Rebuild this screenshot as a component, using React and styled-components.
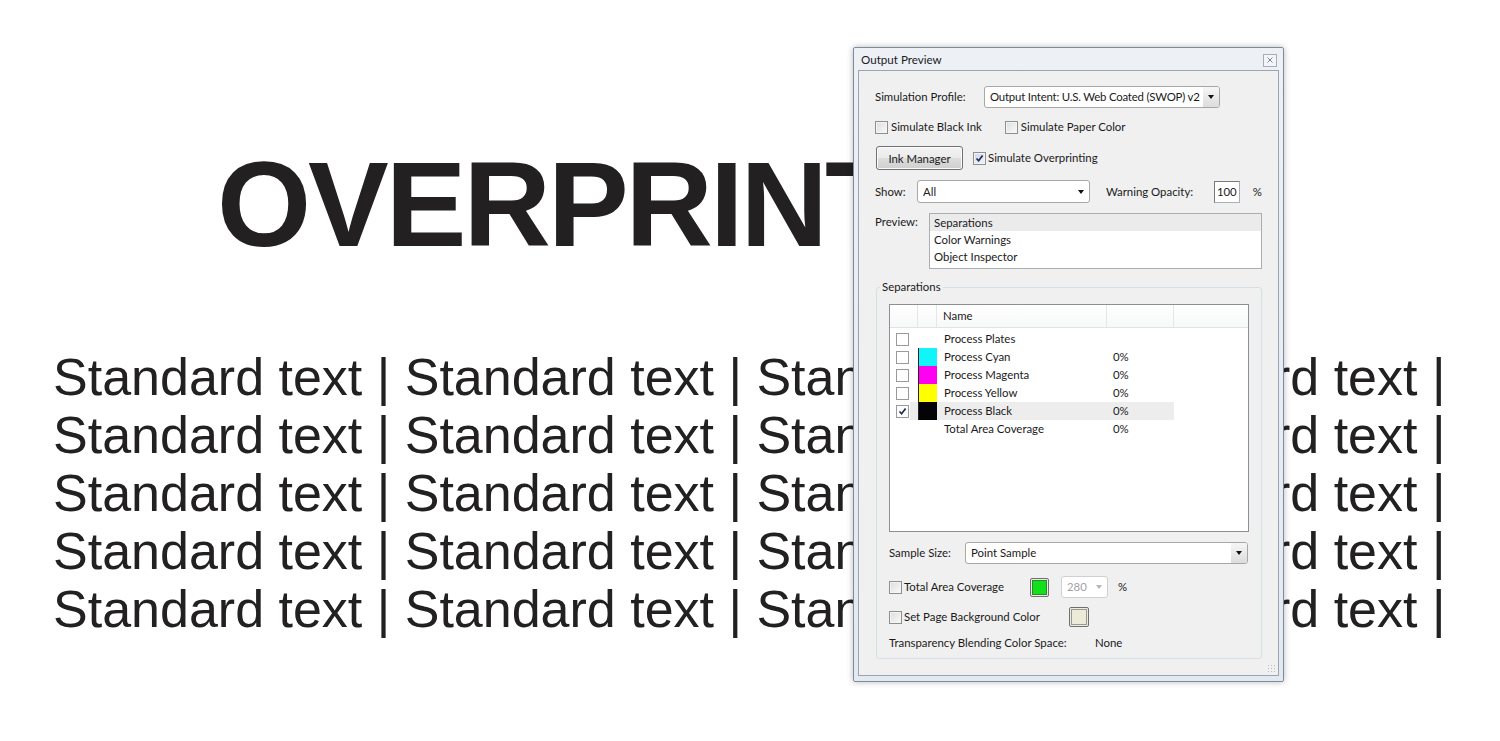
import React from 'react';
import styled, { createGlobalStyle, css } from 'styled-components';

const UI_FONT = `Lato, "Noto Sans", sans-serif`;

const GlobalStyle = createGlobalStyle`
  html, body {
    margin: 0;
    background: #fff;
  }
  body {
    width: 1500px;
    height: 741px;
    overflow: hidden;
  }
`;

// ---------- the document behind the panel ----------

const Page = styled.div`
  position: relative;
  width: 1500px;
  height: 741px;
  padding-top: 144px;
  box-sizing: border-box;
  font-family: "Liberation Sans", Arial, sans-serif;
  color: #222021;
`;

const Heading = styled.h1`
  margin: 0 0 0 217px;
  font-size: 121px;
  line-height: 121px;
  font-weight: 700;
  letter-spacing: -3px;
  white-space: nowrap;
`;

const TextBlock = styled.div`
  margin-top: 83px;
  padding-left: 53px;
`;

const Line = styled.div`
  font-size: 52px;
  line-height: 58px;
  white-space: nowrap;
`;

// ---------- dialog window ----------

const Window = styled.div`
  position: absolute;
  left: 853px;
  top: 47px;
  width: 431px;
  height: 635px;
  box-sizing: border-box;
  display: flex;
  flex-direction: column;
  background: linear-gradient(#edf1f6, #e3e9f0);
  border: 1px solid #7f8b9c;
  border-radius: 2px;
  box-shadow: 0 0 6px rgba(0, 0, 0, 0.28);
  font-family: ${UI_FONT};
  font-size: 11.4px;
  color: #1a1a1a;
`;

const TitleBar = styled.div`
  height: 22px;
  display: flex;
  align-items: center;
  justify-content: space-between;
  padding: 0 6px 0 7px;
`;

const Title = styled.span`
  font-size: 11.6px;
`;

const CloseBox = styled.div`
  width: 14px;
  height: 13px;
  margin-top: 2px;
  box-sizing: border-box;
  border: 1px solid #a3adbb;
  background: #f3f5f8;
  display: flex;
  align-items: center;
  justify-content: center;
`;

const Body = styled.div`
  flex: 1;
  margin: 0 4px 5px 4px;
  border: 1px solid #9aa4b2;
  background: #f0f0f0;
  padding: 15px 16px 0 16px;
  display: flex;
  flex-direction: column;
  position: relative;
`;

const Row = styled.div`
  display: flex;
  align-items: center;
  height: ${p => p.h || 22}px;
  margin-top: ${p => p.mt || 0}px;
`;

const Label = styled.span`
  width: ${p => (p.w ? `${p.w}px` : 'auto')};
  flex-shrink: 0;
  white-space: nowrap;
  line-height: 14px;
  color: ${p => (p.muted ? '#a0a0a0' : 'inherit')};
  margin-left: ${p => p.ml || 0}px;
`;

const Select = styled.div`
  width: ${p => p.w}px;
  height: ${p => p.h || 22}px;
  box-sizing: border-box;
  border: 1px solid #a7a7a7;
  border-radius: 3px;
  background: #fff;
  display: flex;
  align-items: center;
  padding-left: 5px;
  margin-left: ${p => p.ml || 0}px;
  color: ${p => (p.disabled ? '#a2a2a2' : 'inherit')};
  ${p => p.disabled && css`border-color: #d0d0d0;`}
`;

const SelectText = styled.span`
  flex: 1;
  white-space: nowrap;
  overflow: hidden;
  line-height: 14px;
  letter-spacing: ${p => (p.tight ? '-0.2px' : 'normal')};
`;

const Arrow = styled.span`
  width: 16px;
  align-self: stretch;
  display: flex;
  align-items: center;
  justify-content: center;
  background: ${p => (p.shaded ? 'linear-gradient(#f6f6f6, #dcdcdc)' : 'transparent')};
  border-radius: 0 2px 2px 0;
  &::after {
    content: '';
    border-left: 3.5px solid transparent;
    border-right: 3.5px solid transparent;
    border-top: 4px solid ${p => (p.light ? '#b5b5b5' : '#111')};
  }
`;

const CheckBox = styled.span`
  width: 13px;
  height: 13px;
  box-sizing: border-box;
  flex-shrink: 0;
  border: 1px solid #8e8f8f;
  background: linear-gradient(135deg, #dcdcdc, #fbfbfb);
  box-shadow: inset 0 0 0 1px #f4f4f4;
  display: flex;
  align-items: center;
  justify-content: center;
  margin-left: ${p => p.ml || 0}px;
  margin-right: ${p => p.mr ?? 3}px;
  ${p => p.checked && css`background: linear-gradient(135deg, #c9d6ec, #f2f6fc);`}
  ${p => p.flat && css`background: #fff; border-color: #9a9a9a; box-shadow: none;`}
`;

const Check = ({ checked, ml, mr, flat }) => (
  <CheckBox checked={checked} ml={ml} mr={mr} flat={flat}>
    {checked && (
      <svg width="9" height="9" viewBox="0 0 9 9">
        <path d="M1.5 4.5 L3.6 6.8 L7.6 1.6" fill="none" stroke="#1c2a52" strokeWidth="1.7" />
      </svg>
    )}
  </CheckBox>
);

const Button = styled.div`
  width: 87px;
  height: 24px;
  box-sizing: border-box;
  margin-left: 1px;
  border: 1px solid #707070;
  border-radius: 3px;
  background: linear-gradient(#f2f2f2 0%, #ebebeb 50%, #dddddd 51%, #cfcfcf 100%);
  box-shadow: inset 0 0 0 1px #fbfbfb;
  display: flex;
  align-items: center;
  justify-content: center;
  margin-right: 10px;
`;

const TextInput = styled.div`
  width: 26px;
  height: 22px;
  box-sizing: border-box;
  border: 1px solid #abadb3;
  border-top-color: #7a7a7a;
  border-left-color: #7a7a7a;
  background: #fff;
  padding-left: 2px;
  display: flex;
  align-items: center;
`;

const PreviewRow = styled.div`
  display: flex;
  margin-top: 10px;
`;

const PreviewLabel = styled.span`
  width: 54px;
  padding-top: 2px;
  line-height: 14px;
`;

const ListBox = styled.div`
  width: 333px;
  height: 56px;
  box-sizing: border-box;
  border: 1px solid #abadb3;
  background: #fff;
`;

const ListItem = styled.div`
  height: 17px;
  line-height: 17px;
  padding-left: 4px;
  background: ${p => (p.selected ? '#ebebeb' : 'transparent')};
`;

const Group = styled.fieldset`
  margin: 10px 0 0 1px;
  width: 386px;
  height: 380px;
  box-sizing: border-box;
  padding: 9px 12px 0 12px;
  border: 1px solid #d5dfe5;
  border-radius: 3px;
  min-width: 0;
`;

const Legend = styled.legend`
  padding: 0 2px;
  margin-left: -9px;
  line-height: 16px;
`;

const Table = styled.div`
  height: 228px;
  box-sizing: border-box;
  border: 1px solid #8c9096;
  background: #fff;
`;

const HeaderRow = styled.div`
  display: grid;
  grid-template-columns: 28px 19px 170px 67px 1fr;
  height: 22px;
  border-bottom: 1px solid #e2e2e2;
  background: linear-gradient(#ffffff, #f7f8f9);
  margin-bottom: 2px;
`;

const HeaderCell = styled.div`
  border-right: ${p => (p.last ? 'none' : '1px solid #e6e6e6')};
  padding-left: 6px;
  line-height: 22px;
`;

const DataRow = styled.div`
  display: flex;
  height: 18px;
`;

const CheckCell = styled.div`
  width: 20px;
  padding-left: 6px;
  box-sizing: border-box;
  display: flex;
  align-items: center;
`;

const RowBody = styled.div`
  width: 264px;
  display: grid;
  grid-template-columns: 8px 19px 170px 67px;
  background: ${p => (p.selected ? '#ededed' : 'transparent')};
`;

const Swatch = styled.div`
  grid-column: 2;
  background: ${p => p.color || 'transparent'};
  border-left: ${p => (p.color ? '1px solid #222' : 'none')};
`;

const Cell = styled.div`
  padding-left: ${p => p.pl}px;
  line-height: 18px;
  white-space: nowrap;
`;

const ColorButton = styled.div`
  width: ${p => p.size}px;
  height: ${p => p.size}px;
  box-sizing: border-box;
  border: 1px solid #6f6f6f;
  border-radius: 2px;
  padding: 2px;
  background: #ececec;
  flex-shrink: 0;
  &::after {
    content: '';
    display: block;
    width: 100%;
    height: 100%;
    background: ${p => p.fill};
    box-shadow: 0 0 0 1px ${p => p.edge};
  }
`;

const Grip = styled.div`
  position: absolute;
  right: 2px;
  bottom: 2px;
  width: 9px;
  height: 9px;
  background-image: radial-gradient(#b9bec6 0.8px, transparent 1px);
  background-size: 3px 3px;
`;

const separations = [
  { name: 'Process Plates', value: '' },
  { name: 'Process Cyan', value: '0%', color: '#10f4fa' },
  { name: 'Process Magenta', value: '0%', color: '#ff00f0' },
  { name: 'Process Yellow', value: '0%', color: '#ffff00' },
  { name: 'Process Black', value: '0%', color: '#050308', checked: true, selected: true },
  { name: 'Total Area Coverage', value: '0%', noCheck: true },
];

const lineText = 'Standard text | Standard text | Standard text | Standard text |';

function OutputPreview() {
  return (
    <Window>
      <TitleBar>
        <Title>Output Preview</Title>
        <CloseBox>
          <svg width="6" height="6" viewBox="0 0 6 6">
            <path d="M0.5 0.5 L5.5 5.5 M5.5 0.5 L0.5 5.5" stroke="#7d8794" strokeWidth="1" />
          </svg>
        </CloseBox>
      </TitleBar>
      <Body>
        <Row h={22}>
          <Label w={109}>Simulation Profile:</Label>
          <Select w={236}>
            <SelectText tight>Output Intent: U.S. Web Coated (SWOP) v2</SelectText>
            <Arrow shaded />
          </Select>
        </Row>

        <Row h={16} mt={11}>
          <Check />
          <Label>Simulate Black Ink</Label>
          <Check ml={23} />
          <Label>Simulate Paper Color</Label>
        </Row>

        <Row h={24} mt={11}>
          <Button>Ink Manager</Button>
          <Check checked mr={2} />
          <Label>Simulate Overprinting</Label>
        </Row>

        <Row h={23} mt={10}>
          <Label w={42}>Show:</Label>
          <Select w={173} h={23}>
            <SelectText>All</SelectText>
            <Arrow />
          </Select>
          <Label w={108} ml={16}>Warning Opacity:</Label>
          <TextInput>100</TextInput>
          <Label ml={13}>%</Label>
        </Row>

        <PreviewRow>
          <PreviewLabel>Preview:</PreviewLabel>
          <ListBox>
            <ListItem selected>Separations</ListItem>
            <ListItem>Color Warnings</ListItem>
            <ListItem>Object Inspector</ListItem>
          </ListBox>
        </PreviewRow>

        <Group>
          <Legend>Separations</Legend>
          <Table>
            <HeaderRow>
              <HeaderCell />
              <HeaderCell />
              <HeaderCell>Name</HeaderCell>
              <HeaderCell />
              <HeaderCell last />
            </HeaderRow>
            {separations.map(s => (
              <DataRow key={s.name}>
                <CheckCell>{!s.noCheck && <Check flat checked={s.checked} mr={0} />}</CheckCell>
                <RowBody selected={s.selected}>
                  <Swatch color={s.color} />
                  <Cell pl={7}>{s.name}</Cell>
                  <Cell pl={6}>{s.value}</Cell>
                </RowBody>
              </DataRow>
            ))}
          </Table>

          <Row h={22} mt={10}>
            <Label w={76}>Sample Size:</Label>
            <Select w={283}>
              <SelectText>Point Sample</SelectText>
              <Arrow shaded />
            </Select>
          </Row>

          <Row h={22} mt={12}>
            <Check mr={2} />
            <Label w={126}>Total Area Coverage</Label>
            <ColorButton size={19} fill="#12e01a" edge="#2a8a2a" />
            <Select w={47} disabled ml={12}>
              <SelectText>280</SelectText>
              <Arrow light />
            </Select>
            <Label ml={10}>%</Label>
          </Row>

          <Row h={20} mt={9}>
            <Check mr={2} />
            <Label w={165}>Set Page Background Color</Label>
            <ColorButton size={20} fill="#ecebd8" edge="#9a9a8a" />
          </Row>

          <Row h={16} mt={8}>
            <Label w={206}>Transparency Blending Color Space:</Label>
            <Label>None</Label>
          </Row>
        </Group>
        <Grip />
      </Body>
    </Window>
  );
}

export default function App() {
  return (
    <>
      <GlobalStyle />
      <Page>
        <Heading>OVERPRINT</Heading>
        <TextBlock>
          {[0, 1, 2, 3, 4].map(i => (
            <Line key={i}>{lineText}</Line>
          ))}
        </TextBlock>
        <OutputPreview />
      </Page>
    </>
  );
}
